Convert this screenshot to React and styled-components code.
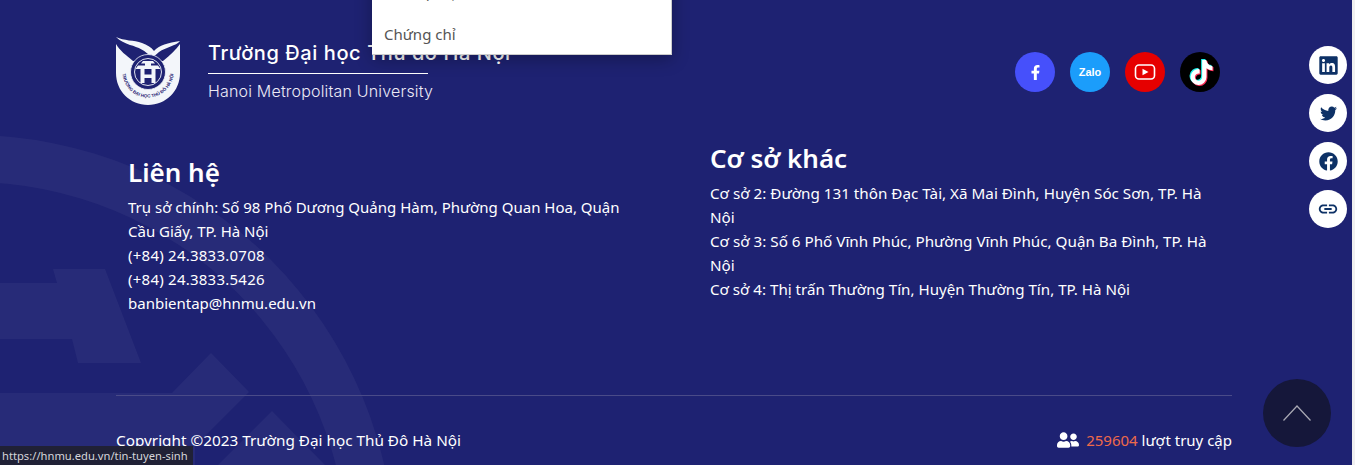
import React from 'react'
import styled, { createGlobalStyle } from 'styled-components'
import { FaLinkedin, FaTwitter, FaFacebook, FaFacebookF, FaTiktok, FaUserFriends } from 'react-icons/fa'
import { MdLink } from 'react-icons/md'

const GlobalStyle = createGlobalStyle`
  html, body {
    margin: 0;
    padding: 0;
    overflow: hidden;
    background: #f0f0f0;
    font-family: "Noto Sans", "Liberation Sans", sans-serif;
  }
`

const Page = styled.div`
  width: 1352px;
  height: 465px;
  position: relative;
  overflow: hidden;
  background: #1e2272;
  color: #fff;
`

const Watermark = styled.svg`
  position: absolute;
  left: 0;
  top: 0;
  width: 1352px;
  height: 465px;
`

const Container = styled.div`
  position: relative;
  width: 1116px;
  margin-left: 116px;
  padding-top: 37px;
`

const TopRow = styled.div`
  display: flex;
  justify-content: space-between;
  align-items: center;
  height: 68px;
  padding-right: 12px;
`

const Brand = styled.div`
  display: flex;
  align-items: center;
  gap: 28px;
`

const BrandText = styled.div`
  display: flex;
  flex-direction: column;
  align-items: flex-start;
  font-family: Inter, "Noto Sans", sans-serif;
`

const BrandTitle = styled.div`
  font-size: 20px;
  font-weight: 500;
  letter-spacing: 0.58px;
  line-height: 24px;
  height: 26px;
  padding-bottom: 6px;
  border-bottom: 1px solid #fff;
  width: 220px;
  white-space: nowrap;
`

const BrandSub = styled.div`
  margin-top: 6px;
  font-size: 16px;
  letter-spacing: 0.18px;
  line-height: 22px;
  font-weight: 300;
  color: #eceaf6;
  white-space: nowrap;
`

const Socials = styled.div`
  display: flex;
  gap: 15px;
  margin-top: 2px;
`

const SocialLink = styled.a`
  width: 40px;
  height: 40px;
  border-radius: 50%;
  display: flex;
  align-items: center;
  justify-content: center;
  background: ${(props) => props.color};
  color: #fff;
  font-family: "Liberation Sans", sans-serif;
  font-weight: 700;
  font-size: 11px;
`

const TikTokGlyph = styled.span`
  position: relative;
  display: block;
  width: 22px;
  height: 25px;
`

const TikTokLayer = styled.span`
  position: absolute;
  left: ${(props) => props.dx}px;
  top: ${(props) => props.dy}px;
  color: ${(props) => props.color};
  line-height: 0;
`

const Columns = styled.div`
  display: flex;
  height: 254px;
  margin-top: 36px;
`

const Column = styled.div`
  width: ${(props) => props.width}px;
  margin-left: ${(props) => props.left}px;
  padding-top: ${(props) => props.top || 0}px;
`

const Heading = styled.h3`
  margin: 0 0 6px;
  font-size: 26px;
  line-height: 34px;
  font-weight: 600;
`

const Line = styled.div`
  font-size: ${(props) => props.size || 15}px;
  line-height: 24px;
`

const PhoneLine = styled(Line)`
  letter-spacing: 0.24px;
`

const Divider = styled.div`
  height: 1px;
  background: #4a4b88;
`

const BottomRow = styled.div`
  display: flex;
  justify-content: space-between;
  padding-top: 32px;
  font-size: 15.3px;
  line-height: 24px;
`

const Visits = styled.div`
  display: flex;
  align-items: center;
  gap: 7px;
  font-size: 15px;
`

const Count = styled.span`
  color: #ee6a4a;
`

const Menu = styled.div`
  position: absolute;
  left: 372px;
  top: -30px;
  width: 299px;
  height: 84px;
  background: #fff;
  box-shadow: 0 4px 16px rgba(0, 0, 0, 0.3);
  border-right: 1px solid #ccc;
  border-bottom: 1px solid #ccc;
  color: #555;
  font-size: 15px;
`

const MenuItem = styled.div`
  height: 42px;
  line-height: 42px;
  padding-left: 12px;
  position: relative;
  top: 1px;
  white-space: nowrap;
`

const SideBar = styled.div`
  position: absolute;
  left: 1309px;
  top: 46px;
  display: flex;
  flex-direction: column;
  gap: 10px;
`

const SideButton = styled.a`
  width: 38px;
  height: 38px;
  border-radius: 50%;
  background: #fff;
  color: #0d3166;
  display: flex;
  align-items: center;
  justify-content: center;
`

const BackToTop = styled.a`
  position: absolute;
  left: 1263px;
  top: 379px;
  width: 68px;
  height: 68px;
  border-radius: 50%;
  background: #15173a;
  display: flex;
  align-items: center;
  justify-content: center;
`

const StatusBar = styled.div`
  position: absolute;
  left: 0;
  bottom: 0;
  width: 193px;
  height: 19px;
  padding-left: 2px;
  box-sizing: border-box;
  background: #202136;
  color: #d5d5da;
  font-size: 11.2px;
  line-height: 19px;
  white-space: nowrap;
`

const Logo = () => (
  <svg width="64" height="68" viewBox="0 0 64 68">
    <defs>
      <path id="logo-arc" d="M7 30 A25.5 25.5 0 1 0 57 30" />
    </defs>
    <path fill="#f3f6fa" d="M0 0 C8 4 18 3 26 6 C31 8 35 10 38 14 C43 8 52 6 64 4 C60 9 50 10 43 15 C40 18 37 20 35 20 C30 14 22 10 14 8 C9 6 4 4 0 0 Z" />
    <path fill="#f3f6fa" d="M0 7 C4 14 10 18 17 24 L47 24 C54 18 60 13 64 7 L64 36 C64 54 50 68 32 68 C14 68 0 54 0 36 Z" />
    <circle cx="32" cy="35" r="17.5" fill="#1e2272" stroke="#f3f6fa" strokeWidth="0.8" />
    <circle cx="32" cy="35" r="13.5" fill="none" stroke="#f3f6fa" strokeWidth="0.9" />
    <path fill="#f3f6fa" d="M27 24 H37 L39 26.5 H35 V28.5 H42 L44.5 32 H19.5 L22 28.5 H29 V26.5 H25 Z M24.5 32 H28.5 V37.5 H35.5 V32 H39.5 V46 H35.5 V41 H28.5 V46 H24.5 Z" />
    <text fontFamily="Liberation Sans, sans-serif" fontSize="4.5" fontWeight="700" fill="#1e2272">
      <textPath href="#logo-arc" startOffset="50%" textAnchor="middle">TRƯỜNG ĐẠI HỌC THỦ ĐÔ HÀ NỘI</textPath>
    </text>
  </svg>
)

const App = () => {
  return (
    <Page>
      <GlobalStyle />
      <Watermark viewBox="0 0 1352 465">
        <g fill="#ffffff" fillOpacity="0.045">
          <path d="M-30 135 A425 425 0 0 1 395 560 L348 560 A378 378 0 0 0 -30 182 Z" />
          <polygon points="53,269 105,269 141,363 78,363 72,339 0,339 0,283 57,283" />
          <polygon points="0,393 172,393 211,353 249,392 195,446 195,465 0,465" />
          <polygon points="272,411 325,465 218,465" />
        </g>
      </Watermark>

      <Container>
        <TopRow>
          <Brand>
            <Logo />
            <BrandText>
              <BrandTitle>Trường Đại học Thủ đô Hà Nội</BrandTitle>
              <BrandSub>Hanoi Metropolitan University</BrandSub>
            </BrandText>
          </Brand>
          <Socials>
            <SocialLink color="#4650fb"><FaFacebookF size={15} /></SocialLink>
            <SocialLink color="#1b9dfb">Zalo</SocialLink>
            <SocialLink color="#e60000">
              <svg width="24" height="24" viewBox="0 0 24 24">
                <rect x="2.5" y="5" width="19" height="14" rx="3.5" fill="none" stroke="#fff" strokeWidth="1.6" />
                <path d="M9.5 8.8 L15.5 12 L9.5 15.2 Z" fill="#fff" />
              </svg>
            </SocialLink>
            <SocialLink color="#000">
              <TikTokGlyph>
                <TikTokLayer dx={-1} dy={-1} color="#25f4ee"><FaTiktok size={25} /></TikTokLayer>
                <TikTokLayer dx={1} dy={1} color="#fe2c55"><FaTiktok size={25} /></TikTokLayer>
                <TikTokLayer dx={0} dy={0} color="#fff"><FaTiktok size={25} /></TikTokLayer>
              </TikTokGlyph>
            </SocialLink>
          </Socials>
        </TopRow>

        <Columns>
          <Column width={505} left={12} top={14}>
            <Heading>Liên hệ</Heading>
            <Line>Trụ sở chính: Số 98 Phố Dương Quảng Hàm, Phường Quan Hoa, Quận Cầu Giấy, TP. Hà Nội</Line>
            <PhoneLine>(+84) 24.3833.0708</PhoneLine>
            <PhoneLine>(+84) 24.3833.5426</PhoneLine>
            <Line>banbientap@hnmu.edu.vn</Line>
          </Column>
          <Column width={510} left={77}>
            <Heading>Cơ sở khác</Heading>
            <Line size={15.22}>Cơ sở 2: Đường 131 thôn Đạc Tài, Xã Mai Đình, Huyện Sóc Sơn, TP. Hà Nội</Line>
            <Line size={15.22}>Cơ sở 3: Số 6 Phố Vĩnh Phúc, Phường Vĩnh Phúc, Quận Ba Đình, TP. Hà Nội</Line>
            <Line size={15.15}>Cơ sở 4: Thị trấn Thường Tín, Huyện Thường Tín, TP. Hà Nội</Line>
          </Column>
        </Columns>

        <Divider />

        <BottomRow>
          <div>Copyright ©2023 Trường Đại học Thủ Đô Hà Nội</div>
          <Visits>
            <FaUserFriends size={22} />
            <span><Count>259604</Count> lượt truy cập</span>
          </Visits>
        </BottomRow>
      </Container>

      <Menu>
        <MenuItem>Tiết học tại chức</MenuItem>
        <MenuItem>Chứng chỉ</MenuItem>
      </Menu>

      <SideBar>
        <SideButton><FaLinkedin size={21} /></SideButton>
        <SideButton><FaTwitter size={17} /></SideButton>
        <SideButton><FaFacebook size={19} /></SideButton>
        <SideButton><MdLink size={22} /></SideButton>
      </SideBar>

      <BackToTop>
        <svg width="30" height="18" viewBox="0 0 30 18">
          <path d="M1.5 16.5 L15 2 L28.5 16.5" fill="none" stroke="#a9a9b4" strokeWidth="1.2" />
        </svg>
      </BackToTop>

      <StatusBar>https://hnmu.edu.vn/tin-tuyen-sinh</StatusBar>
    </Page>
  )
}

export default App
